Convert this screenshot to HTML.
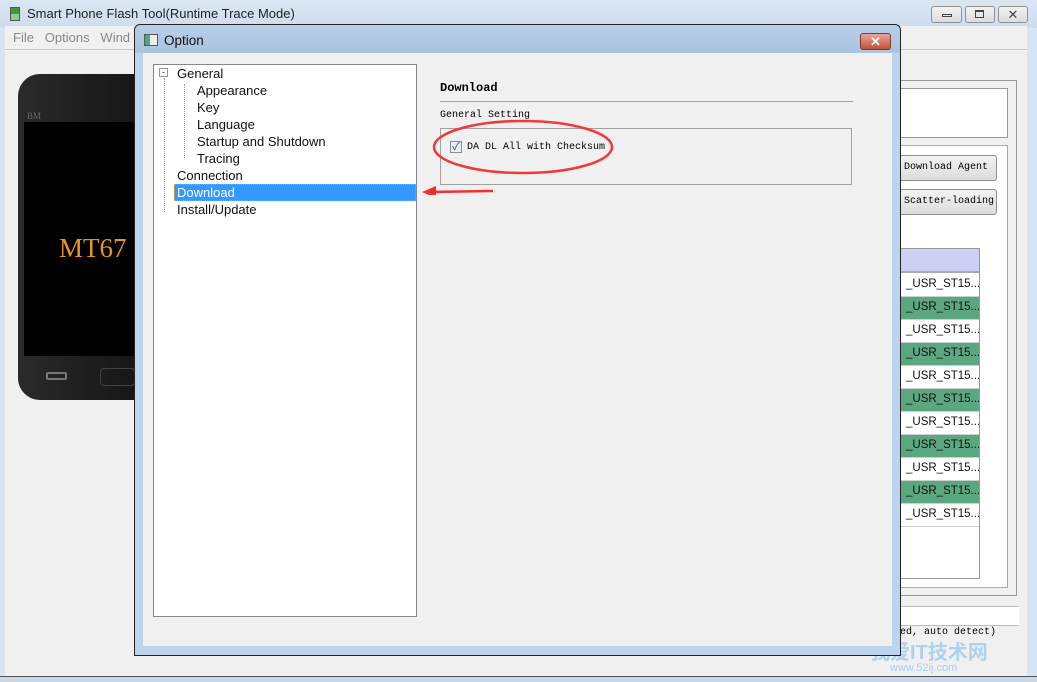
<!DOCTYPE html>
<html><head><meta charset="utf-8"><style>
*{margin:0;padding:0;box-sizing:border-box}
body{width:1037px;height:682px;overflow:hidden;position:relative;background:#d7e4f2;font-family:"Liberation Sans","Noto Sans CJK SC",sans-serif;font-size:13px}
.a{position:absolute;white-space:nowrap}
.mono{font-family:"Liberation Mono","WenQuanYi Zen Hei",monospace;font-size:10px}
.btn{border:1px solid #8e8f8f;border-radius:3px;background:linear-gradient(#f2f2f2,#dcdcdc);}
.row{position:absolute;left:900px;width:79px;height:23px;border-bottom:1px solid #cfcfcf;padding:4px 0 0 6px;font-size:11.5px;color:#111;overflow:hidden;white-space:nowrap}
.g{background:#5ba880}
</style></head><body>
<div class="a" style="left:0;top:0;width:1037px;height:28px;background:linear-gradient(#dbe6f3,#cddced)"></div>
<div class="a" style="left:10px;top:7px;width:10px;height:14px;background:linear-gradient(#3a9d3a 50%,#8ad08a 50%);border:1px solid #555"></div>
<div class="a" style="left:27px;top:6px;font-size:13px;color:#222">Smart Phone Flash Tool(Runtime Trace Mode)</div>
<div class="a btn" style="left:931px;top:6px;width:31px;height:17px;border-radius:3px"></div>
<div class="a" style="left:942px;top:14px;width:10px;height:3px;border:1px solid #444"></div>
<div class="a btn" style="left:965px;top:6px;width:30px;height:17px"></div>
<div class="a" style="left:975px;top:10px;width:9px;height:8px;border:1px solid #444;border-top-width:2px"></div>
<div class="a btn" style="left:998px;top:6px;width:30px;height:17px;text-align:center;font-size:13px;line-height:15px;color:#444">✕</div>
<div class="a" style="left:5px;top:26px;width:1022px;height:650px;background:#f0f0f0"></div>
<div class="a" style="left:5px;top:49px;width:1022px;height:1px;background:#c8c8c8"></div>
<div class="a" style="left:13px;top:30px;color:#888">File&nbsp;&nbsp;&nbsp;Options&nbsp;&nbsp;&nbsp;Wind</div>
<div class="a" style="left:0;top:676px;width:1037px;height:6px;background:#c9d7e6;border-top:1px solid #555"></div>
<div class="a" style="left:18px;top:74px;width:150px;height:326px;background:linear-gradient(90deg,#2a2a2a,#111);border-radius:22px"></div>
<div class="a" style="left:24px;top:122px;width:120px;height:234px;background:#000"></div>
<div class="a" style="left:27px;top:111px;font-family:'Liberation Serif',serif;font-size:9px;color:#666">BM</div>
<div class="a" style="left:59px;top:233px;font-family:'Liberation Serif',serif;font-size:27px;color:#e89323">MT67</div>
<div class="a" style="left:46px;top:372px;width:21px;height:8px;border:2px solid #777;border-radius:2px"></div>
<div class="a" style="left:100px;top:368px;width:35px;height:18px;border:1px solid #444;border-radius:4px"></div>
<div class="a" style="left:895px;top:80px;width:122px;height:516px;border:1px solid #999;background:#f0f0f0"></div>
<div class="a" style="left:895px;top:88px;width:113px;height:50px;border:1px solid #999;background:#fff"></div>
<div class="a" style="left:895px;top:145px;width:113px;height:443px;border:1px solid #aaa;background:#fff"></div>
<div class="a btn mono" style="left:895px;top:155px;width:102px;height:26px;padding:6px 0 0 8px">Download Agent</div>
<div class="a btn mono" style="left:895px;top:189px;width:102px;height:26px;padding:6px 0 0 8px">Scatter-loading</div>
<div class="a" style="left:895px;top:248px;width:85px;height:331px;border:1px solid #999;background:#fff"></div>
<div class="a" style="left:895px;top:249px;width:84px;height:24px;background:#cfcff5;border-bottom:2px solid #aaa"></div>
<div class="row" style="top:274px">_USR_ST15...</div>
<div class="row g" style="top:297px">_USR_ST15...</div>
<div class="row" style="top:320px">_USR_ST15...</div>
<div class="row g" style="top:343px">_USR_ST15...</div>
<div class="row" style="top:366px">_USR_ST15...</div>
<div class="row g" style="top:389px">_USR_ST15...</div>
<div class="row" style="top:412px">_USR_ST15...</div>
<div class="row g" style="top:435px">_USR_ST15...</div>
<div class="row" style="top:458px">_USR_ST15...</div>
<div class="row g" style="top:481px">_USR_ST15...</div>
<div class="row" style="top:504px">_USR_ST15...</div>
<div class="a" style="left:895px;top:606px;width:124px;height:20px;background:#fff;border-top:1px solid #bbb;border-bottom:1px solid #bbb"></div>
<div class="a mono" style="left:900px;top:627px">ed, auto detect)</div>
<div class="a" style="left:870px;top:636px;font-size:20px;font-weight:bold;color:rgba(90,170,240,.45)">我爱IT技术网</div>
<div class="a" style="left:890px;top:662px;font-size:11px;color:rgba(90,170,240,.5)">www.52ij.com</div>
<div class="a" style="left:134px;top:24px;width:767px;height:632px;background:#bcd4ee;border:1px solid #222;border-radius:6px 6px 0 0"></div>
<div class="a" style="left:135px;top:25px;width:765px;height:28px;background:linear-gradient(#b9cfe8,#a9c3e0);border-radius:6px 6px 0 0"></div>
<div class="a" style="left:144px;top:34px;width:14px;height:12px;border:1px solid #555;background:linear-gradient(90deg,#4a8 40%,#eee 40%)"></div>
<div class="a" style="left:164px;top:33px;color:#111;font-size:13.5px">Option</div>
<div class="a" style="left:860px;top:33px;width:31px;height:17px;border:1px solid #7a3a30;border-radius:3px;background:linear-gradient(#e9a699,#c5503c);color:#fff;text-align:center;font-size:13px;line-height:15px;font-weight:bold">✕</div>
<div class="a" style="left:143px;top:53px;width:749px;height:593px;background:#f0f0f0"></div>
<div class="a" style="left:153px;top:64px;width:264px;height:553px;background:#fff;border:1px solid #828790"></div>
<div class="a" style="left:159px;top:68px;width:9px;height:9px;border:1px solid #999;font-size:9px;line-height:6px;text-align:center;color:#333">-</div>
<div class="a" style="left:164px;top:78px;height:134px;border-left:1px dotted #999"></div>
<div class="a" style="left:184px;top:84px;height:74px;border-left:1px dotted #999"></div>
<div class="a" style="left:177px;top:66px;color:#111">General</div>
<div class="a" style="left:197px;top:83px;color:#111">Appearance</div>
<div class="a" style="left:197px;top:100px;color:#111">Key</div>
<div class="a" style="left:197px;top:117px;color:#111">Language</div>
<div class="a" style="left:197px;top:134px;color:#111">Startup and Shutdown</div>
<div class="a" style="left:197px;top:151px;color:#111">Tracing</div>
<div class="a" style="left:177px;top:168px;color:#111">Connection</div>
<div class="a" style="left:174px;top:184px;width:242px;height:17px;background:#3399ff;border:1px dotted #c8a060"></div>
<div class="a" style="left:177px;top:185px;color:#fff">Download</div>
<div class="a" style="left:177px;top:202px;color:#111">Install/Update</div>
<div class="a mono" style="left:440px;top:81px;font-size:12px;font-weight:bold">Download</div>
<div class="a" style="left:440px;top:101px;width:413px;height:1px;background:#a0a0a0"></div>
<div class="a mono" style="left:440px;top:110px">General Setting</div>
<div class="a" style="left:440px;top:128px;width:412px;height:57px;border:1px solid #a0a0a0"></div>
<div class="a" style="left:450px;top:141px;width:12px;height:12px;border:1px solid #8c8c8c;background:#e8eef6;color:#2a4a9a;font-size:11px;line-height:10px;text-align:center">✓</div>
<div class="a mono" style="left:467px;top:142px">DA DL All with Checksum</div>
<svg class="a" style="left:420px;top:115px" width="200" height="80"><ellipse cx="103" cy="32" rx="89" ry="26" fill="none" stroke="#f03a3a" stroke-width="2.5"/><path d="M73 76 L8 77" stroke="#f03030" stroke-width="2.5"/><path d="M2 77 L16 71 L16 83Z" fill="#f03030"/></svg>
</body></html>
